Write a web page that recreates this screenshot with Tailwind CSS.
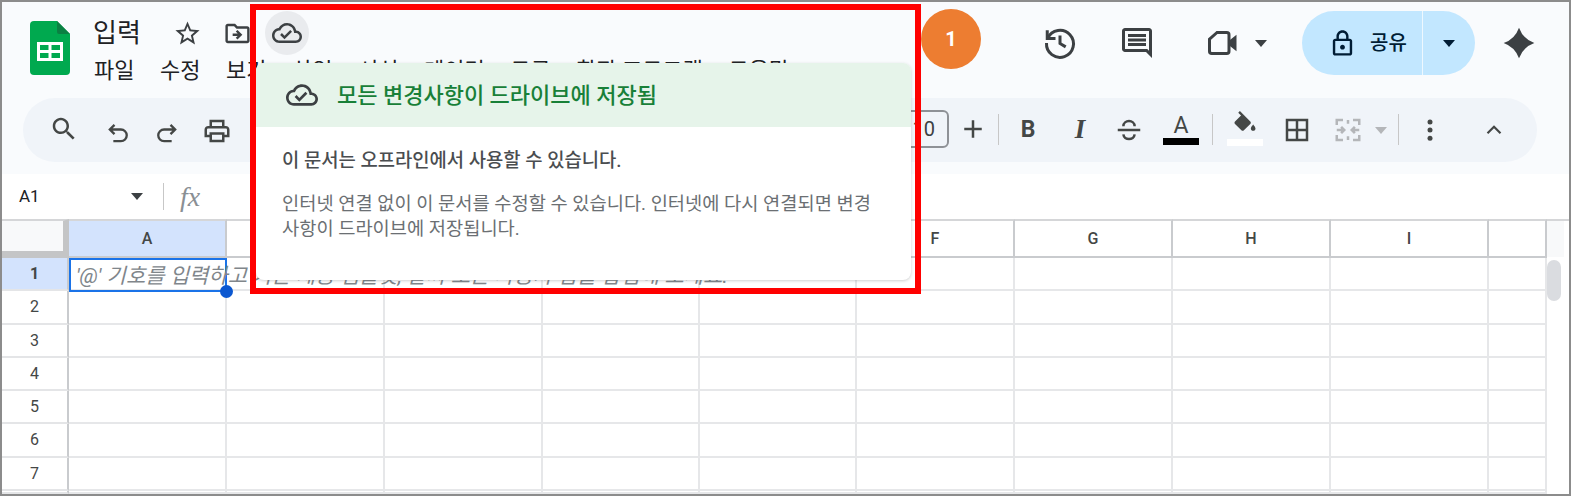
<!DOCTYPE html>
<html lang="ko">
<head>
    <meta charset="UTF-8">
    <title>입력 - Sheets</title>
    <script src="https://cdn.jsdelivr.net/npm/@tailwindcss/browser@4"></script>
</head>
<body>
    <div class="relative w-[1571px] h-[496px] overflow-hidden bg-white border-2 border-[#8c8c8c] text-[#202124] font-['Roboto','Noto_Sans_CJK_KR',sans-serif]">

        <!-- Top area -->
        <div class="h-[172px] bg-[#f9fbfd]">
            <div class="flex h-[96px]">
                <!-- Logo -->
                <svg class="ml-[28px] mt-[19px] w-[40px] h-[54px]" viewBox="0 0 40 54">
                    <path d="M4 0H27L40 13V50a4 4 0 0 1-4 4H4a4 4 0 0 1-4-4V4a4 4 0 0 1 4-4z" fill="#00a94f"/>
                    <path d="M27 0L40 13H29a2 2 0 0 1-2-2z" fill="#0b8043"/>
                    <path d="M7 21H33V40H7zM10 24V29H18.500V24zM21.500 24V29H30V24zM10 32V37H18.500V32zM21.500 32V37H30V32z" fill="#fff" fill-rule="evenodd"/>
                </svg>

                <!-- Title and menu -->
                <div class="ml-[23px] mt-[9px]">
                    <div class="flex items-center h-[44px]">
                        <span class="w-[49px] text-[26px] leading-none whitespace-nowrap">입력</span>
                        <svg class="ml-[31px] w-[29px] h-[29px] fill-[#3c4043]" viewBox="0 0 24 24"><path d="M22 9.240l-7.190-.620L12 2 9.190 8.630 2 9.240l5.460 4.730L5.820 21 12 17.270 18.180 21l-1.630-7.030L22 9.240zM12 15.400l-3.760 2.270 1-4.280-3.320-2.880 4.380-.380L12 6.100l1.710 4.040 4.380.380-3.320 2.880 1 4.280L12 15.400z"/></svg>
                        <svg class="ml-[21px] w-[29px] h-[29px] fill-[#3c4043]" viewBox="0 0 24 24"><path d="M20 6h-8l-2-2H4c-1.100 0-2 .9-2 2v12c0 1.100.9 2 2 2h16c1.100 0 2-.9 2-2V8c0-1.100-.9-2-2-2zm0 12H4V6h5.170l2 2H20v10zm-8.010-9l-1.410 1.410L12.160 12H8v2h4.160l-1.590 1.590L11.990 17 16 13.010 11.990 9z"/></svg>
                        <div class="ml-[13px] w-[44px] h-[44px] rounded-full bg-[#e9ebee] flex items-center justify-center">
                            <svg class="w-[30px] h-[30px] fill-[#3c4043]" viewBox="0 0 24 24"><path d="M19.350 10.040C18.670 6.590 15.640 4 12 4 9.110 4 6.600 5.640 5.350 8.040 2.340 8.360 0 10.910 0 14c0 3.310 2.690 6 6 6h13c2.760 0 5-2.240 5-5 0-2.640-2.050-4.780-4.650-4.960zM19 18H6c-2.210 0-4-1.790-4-4 0-2.050 1.530-3.760 3.560-3.970l1.070-.110.5-.950C8.080 7.140 9.940 6 12 6c2.620 0 4.880 1.860 5.390 4.430l.3 1.500 1.530.110c1.560.1 2.780 1.410 2.780 2.960 0 1.650-1.350 3-3 3zm-9-3.820l-2.090-2.090L6.500 13.500 10 17l6.010-6.010-1.410-1.410z"/></svg>
                        </div>
                    </div>
                    <div class="flex gap-[25.500px] pl-px text-[22px] leading-[32px] text-[#202124] whitespace-nowrap">
                        <span>파일</span><span>수정</span><span>보기</span><span>삽입</span><span>서식</span><span>데이터</span><span>도구</span><span>확장 프로그램</span><span>도움말</span>
                    </div>
                </div>

                <!-- Right actions -->
                <div class="ml-auto mr-[34px] mt-[9px] h-[64px] flex items-center">
                    <svg class="w-[36px] h-[36px] fill-none stroke-[#3c4043] stroke-2" viewBox="0 0 24 24"><path d="M3.500 3.500V9H9"/><path d="M3.800 8.800A9 9 0 1 1 3 12"/><path d="M12 7v5.300l3.800 2.300"/></svg>
                    <svg class="ml-[41px] w-[36px] h-[36px] fill-[#3c4043]" viewBox="0 0 24 24"><path d="M22 4c0-1.100-.9-2-2-2H4c-1.100 0-2 .9-2 2v12c0 1.100.9 2 2 2h14l4 4V4zm-2 13.170L18.830 16H4V4h16v13.170zM6 12h12v2H6zm0-3h12v2H6zm0-3h12v2H6z"/></svg>
                    <svg class="ml-[50px] w-[36px] h-[36px]" viewBox="0 0 24 24"><path d="M8 5L3 9.500V17.500a1.500 1.500 0 0 0 1.500 1.500H14.500a1.500 1.500 0 0 0 1.500-1.500V6.500A1.500 1.500 0 0 0 14.500 5z" fill="none" stroke="#3c4043" stroke-width="2"/><path d="M16 10.500L21 6.500V17.500L16 13.500z" fill="#3c4043"/></svg>
                    <svg class="ml-[14px] w-[12px] h-[7px] fill-[#3c4043]" viewBox="0 0 12 7"><path d="M0 0h12L6 7z"/></svg>

                    <div class="ml-[35px] w-[173px] h-[64px] rounded-full bg-[#c2e7ff] flex items-center text-[#001d35]">
                        <div class="w-[120px] h-full flex items-center">
                            <svg class="ml-[26px] w-[29px] h-[29px] fill-[#001d35]" viewBox="0 0 24 24"><path d="M18 8h-1V6c0-2.760-2.240-5-5-5S7 3.240 7 6v2H6c-1.100 0-2 .9-2 2v10c0 1.100.9 2 2 2h12c1.100 0 2-.9 2-2V10c0-1.100-.9-2-2-2zM9 6c0-1.660 1.340-3 3-3s3 1.340 3 3v2H9V6zm9 14H6V10h12v10zm-6-3c1.100 0 2-.9 2-2s-.9-2-2-2-2 .9-2 2 .9 2 2 2z"/></svg>
                            <span class="ml-[13px] text-[20px] font-medium whitespace-nowrap">공유</span>
                        </div>
                        <div class="w-px h-full bg-[#eef8ff]"></div>
                        <svg class="ml-[20px] w-[12px] h-[7px] fill-[#001d35]" viewBox="0 0 12 7"><path d="M0 0h12L6 7z"/></svg>
                    </div>

                    <svg class="ml-[28px] w-[32px] h-[32px] fill-[#3c4043]" viewBox="0 0 24 24"><path d="M12 0.500Q15 9 23.500 12 15 15 12 23.500 9 15 0.500 12 9 9 12 0.500z"/></svg>
                </div>
            </div>

            <!-- Toolbar -->
            <div class="ml-[21px] w-[1514px] h-[64px] rounded-full bg-[#f0f4f9] flex items-center">
                <svg class="ml-[26px] w-[30px] h-[30px] fill-[#444746] -mt-[3px]" viewBox="0 0 24 24"><path d="M15.500 14h-.79l-.28-.27C15.410 12.590 16 11.110 16 9.500 16 5.910 13.090 3 9.500 3S3 5.910 3 9.500 5.910 16 9.500 16c1.610 0 3.090-.59 4.230-1.570l.27.28v.79l5 4.990L20.490 19l-4.990-5zm-6 0C7.010 14 5 11.990 5 9.500S7.010 5 9.500 5 14 7.010 14 9.500 11.990 14 9.500 14z"/></svg>
                <svg class="ml-[25px] w-[28px] h-[28px] fill-none stroke-[#444746] stroke-2 mt-[6px]" viewBox="0 0 24 24"><path d="M9 5L5 9l4 4M5 9h9.500a5 5 0 0 1 0 10H8"/></svg>
                <svg class="ml-[21px] w-[28px] h-[28px] fill-none stroke-[#444746] stroke-2 mt-[6px]" viewBox="0 0 24 24"><path d="M15 5l4 4-4 4M19 9H9.500a5 5 0 0 0 0 10H16"/></svg>
                <svg class="ml-[21px] w-[30px] h-[30px] fill-[#444746] mt-[2px]" viewBox="0 0 24 24"><path d="M19 8h-1V3H6v5H5c-1.660 0-3 1.340-3 3v6h4v4h12v-4h4v-6c0-1.660-1.340-3-3-3zM8 5h8v3H8V5zm8 12v2H8v-4h8v2zm2-2v-2H6v2H4v-4c0-.55.45-1 1-1h14c.55 0 1 .45 1 1v4h-2z"/></svg>

                <!-- Font size, mostly under the popup -->
                <div class="ml-[668px] w-[49px] h-[38px] rounded-md border-2 border-[#8e9196] flex items-center justify-end pr-[12px] text-[20px] text-[#3c4043] -mt-[2px]">10</div>
                <svg class="ml-[9px] w-[30px] h-[30px] fill-[#444746] -mt-[2px]" viewBox="0 0 24 24"><path d="M19 13h-6v6h-2v-6H5v-2h6V5h2v6h6z"/></svg>
                <div class="ml-[10px] w-px h-[31px] bg-[#c7c7c7] -mt-[1px]"></div>
                <span class="ml-[14px] w-[30px] text-center text-[23px] font-bold leading-none text-[#444746] -mt-[1px]">B</span>
                <span class="ml-[22px] w-[30px] text-center text-[27px] font-bold italic leading-none text-[#444746] font-['Liberation_Serif',serif] -mt-[1px]">I</span>
                <svg class="ml-[19px] w-[30px] h-[30px] fill-none stroke-[#444746] stroke-2 -mt-[1px]" viewBox="0 0 24 24"><path d="M3 12h18M7.500 9C7.500 3.500 16.500 3.500 16.500 9M7.500 15.500C8 20.500 16 20.500 16.500 15.500"/></svg>
                <div class="ml-[19px] w-[36px] flex flex-col items-center mt-[-1px]">
                    <span class="text-[23px] leading-[23px] text-[#444746]">A</span>
                    <div class="w-[36px] h-[7px] bg-black mt-[1px]"></div>
                </div>
                <div class="ml-[13px] w-px h-[31px] bg-[#c7c7c7] -mt-[1px]"></div>
                <div class="ml-[14px] w-[36px] flex flex-col items-center -mt-[4px]">
                    <svg class="w-[28px] h-[28px] fill-[#444746]" viewBox="0 0 24 24"><path d="M16.560 8.940L7.620 0 6.210 1.410l2.380 2.380-5.150 5.150c-.59.59-.59 1.540 0 2.120l5.500 5.500c.29.29.68.44 1.060.44s.77-.15 1.060-.44l5.500-5.500c.59-.58.59-1.530 0-2.120zM19 11.500s-2 2.170-2 3.500c0 1.100.9 2 2 2s2-.9 2-2c0-1.330-2-3.500-2-3.500z"/></svg>
                    <div class="w-[36px] h-[7px] bg-white"></div>
                </div>
                <svg class="ml-[19px] w-[30px] h-[30px] fill-[#444746] -mt-[1px]" viewBox="0 0 24 24"><path d="M3 3v18h18V3H3zm8 16H5v-6h6v6zm0-8H5V5h6v6zm8 8h-6v-6h6v6zm0-8h-6V5h6v6z"/></svg>
                <svg class="ml-[21px] w-[30px] h-[30px] fill-none stroke-[#b4b6b9] stroke-2 -mt-[1px]" viewBox="0 0 24 24"><path d="M3 8V4h5M16 4h5v4M3 16v4h5M16 20h5v-4M3 12h6M6.500 9.500L9 12l-2.500 2.500M21 12h-6M17.500 9.500L15 12l2.500 2.500M12 4v3M12 17v3"/></svg>
                <svg class="ml-[12px] w-[12px] h-[7px] fill-[#b4b6b9]" viewBox="0 0 12 7"><path d="M0 0h12L6 7z"/></svg>
                <div class="ml-[11px] w-px h-[31px] bg-[#c7c7c7] -mt-[1px]"></div>
                <svg class="ml-[16px] w-[30px] h-[30px] fill-[#444746] -mt-[1px]" viewBox="0 0 24 24"><circle cx="12" cy="5.500" r="2"/><circle cx="12" cy="12" r="2"/><circle cx="12" cy="18.500" r="2"/></svg>
                <svg class="ml-[36px] w-[26px] h-[26px] fill-none stroke-[#444746] stroke-2 -mt-[1px]" viewBox="0 0 24 24"><path d="M6 15l6-6 6 6"/></svg>
            </div>
        </div>

        <!-- Formula bar -->
        <div class="h-[45px] flex items-center bg-white">
            <span class="ml-[17px] w-[24px] text-[17px] leading-none">A1</span>
            <svg class="ml-[88px] w-[12px] h-[7px] fill-[#3c4043]" viewBox="0 0 12 7"><path d="M0 0h12L6 7z"/></svg>
            <div class="ml-[20px] w-px h-[27px] bg-[#c7c7c7]"></div>
            <span class="ml-[16px] text-[28px] leading-none italic text-[#8a8f94] font-['Liberation_Serif',serif]">fx</span>
        </div>

        <!-- Sheet grid -->
        <div class="relative flex h-[275px]">
            <div id="grid" class="grid w-[1545px] grid-cols-[67px_158px_158px_158px_157px_157px_158px_158px_158px_158px_58px] grid-rows-[39px_33px_34px_33px_33px_33px_34px_33px_3px]"></div>
            <div class="w-[22px] border-t-2 border-[#d5d6d8]">
                <div class="w-[17px] h-[36px] bg-[#f8f9fa]"></div>
                <div class="mt-[3px] w-[14px] h-[41px] rounded-full bg-[#dadce0]"></div>
            </div>

            <!-- Selected cell with its overflowing text -->
            <div class="absolute left-[67px] top-[39px] w-[158px] h-[34px] border-2 border-[#1a73e8]">
                <span class="absolute left-[5px] top-[2px] text-[21px] leading-[28px] italic text-[#80868b] whitespace-nowrap">'@' 기호를 입력하고 기본 제공 템플릿, 날짜 또는 사용자 칩을 삽입해 보세요.</span>
                <div class="absolute -right-[8px] -bottom-[8px] w-[13px] h-[13px] rounded-full bg-[#0b57d0]"></div>
            </div>
        </div>

        <!-- Save status popup -->
        <div class="absolute left-[254px] top-[61px] w-[655px] h-[217px] rounded-lg bg-white overflow-hidden shadow-[0_1px_3px_rgba(60,64,67,0.25)]">
            <div class="h-[64px] bg-[#e6f4ea] flex items-center">
                <svg class="ml-[30px] w-[32px] h-[32px] fill-[#3c4043]" viewBox="0 0 24 24"><path d="M19.350 10.040C18.670 6.590 15.640 4 12 4 9.110 4 6.600 5.640 5.350 8.040 2.340 8.360 0 10.910 0 14c0 3.310 2.690 6 6 6h13c2.760 0 5-2.240 5-5 0-2.640-2.050-4.780-4.650-4.960zM19 18H6c-2.210 0-4-1.790-4-4 0-2.050 1.530-3.760 3.560-3.970l1.070-.110.5-.950C8.080 7.140 9.940 6 12 6c2.620 0 4.880 1.860 5.390 4.430l.3 1.500 1.530.110c1.560.1 2.780 1.410 2.780 2.960 0 1.650-1.350 3-3 3zm-9-3.820l-2.090-2.090L6.500 13.500 10 17l6.010-6.010-1.410-1.410z"/></svg>
                <span class="ml-[19px] text-[22px] font-medium text-[#188038] whitespace-nowrap mt-[1px]">모든 변경사항이 드라이브에 저장됨</span>
            </div>
            <div class="pl-[26px] pr-[30px] pt-[22px]">
                <p class="text-[18.8px] leading-[24px] font-medium text-[#4a4d50]">이 문서는 오프라인에서 사용할 수 있습니다.</p>
                <p class="mt-[19px] text-[18.7px] leading-[25px] text-[#6b6f73] break-keep">인터넷 연결 없이 이 문서를 수정할 수 있습니다. 인터넷에 다시 연결되면 변경 사항이 드라이브에 저장됩니다.</p>
            </div>
        </div>

        <!-- Red highlight box -->
        <div class="absolute left-[248px] top-[2px] w-[671px] h-[290px] border-[6px] border-[#ff0000] pointer-events-none"></div>

        <!-- Step badge -->
        <div class="absolute left-[919px] top-[7px] w-[60px] h-[60px] rounded-full bg-[#ed7d31] flex items-center justify-center text-white text-[20px] font-bold">1</div>
    </div>

    <script>
        // Build the sheet cells (columns B-E sit under the popup, their labels never show)
        const grid = document.getElementById('grid');
        const columns = ['', 'A', '', '', '', '', 'F', 'G', 'H', 'I', ''];
        const rowLabels = ['', '1', '2', '3', '4', '5', '6', '7', ''];

        rowLabels.forEach((rowLabel, r) => {
            columns.forEach((colLabel, c) => {
                const cell = document.createElement('div');
                if (r === 0 && c === 0) {
                    cell.className = 'bg-[#f8f9fa] border-t-2 border-t-[#d5d6d8] border-r-[6px] border-b-[7px] border-[#c4c5c6]';
                } else if (r === 0) {
                    cell.className = 'flex items-center justify-center text-[16px] font-medium text-[#444746] border-t-2 border-t-[#d5d6d8] border-r-2 border-b-2 border-[#c9cbce]';
                    cell.textContent = colLabel;
                    if (c === 1) cell.className += ' bg-[#d3e3fd] font-bold text-[#041e49]';
                } else if (c === 0) {
                    cell.className = 'flex items-center justify-center text-[16px] text-[#444746] border-r-2 border-b-2 border-r-[#c9cbce] border-b-[#e4e5e7]';
                    cell.textContent = rowLabel;
                    if (r === 1) cell.className += ' bg-[#d3e3fd] font-bold text-[#041e49]';
                } else {
                    cell.className = 'border-r-2 border-b-2 border-[#e6e7e9]';
                }
                grid.appendChild(cell);
            });
        });
    </script>
</body>
</html>
